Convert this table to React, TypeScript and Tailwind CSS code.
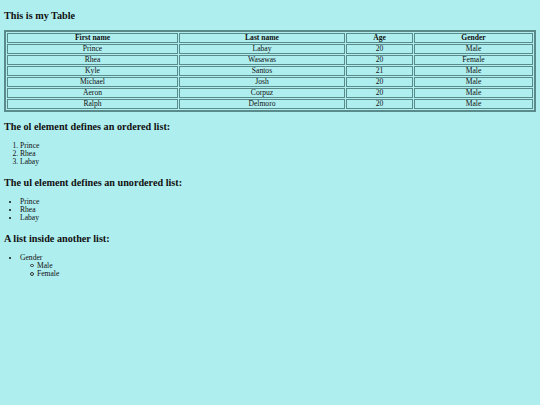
import React from "react";

type Person = { first: string; last: string; age: number; gender: string };

const people: Person[] = [
  { first: "Prince", last: "Labay", age: 20, gender: "Male" },
  { first: "Rhea", last: "Wasawas", age: 20, gender: "Female" },
  { first: "Kyle", last: "Santos", age: 21, gender: "Male" },
  { first: "Michael", last: "Josh", age: 20, gender: "Male" },
  { first: "Aeron", last: "Corpuz", age: 20, gender: "Male" },
  { first: "Ralph", last: "Delmoro", age: 20, gender: "Male" },
];

const cell = "border border-[#5a8b8b] p-0 h-[10px] leading-[8px] text-center";

function Heading({ children }: { children: React.ReactNode }) {
  return <h2 className="text-[10.2px] leading-[12px] font-bold mt-[9px] mb-[9px]">{children}</h2>;
}

function CircleItem({ children }: { children: React.ReactNode }) {
  return (
    <li className="flex items-center">
      <span className="w-[3.5px] h-[3.5px] rounded-full border-[0.8px] border-[#333] -ml-[7px] mr-[3.5px]" />
      {children}
    </li>
  );
}

export default function App(): React.JSX.Element {
  return (
    <div className="min-h-[405px] bg-[#afeeee] text-[#111] font-['Liberation_Serif',serif] text-[7.6px] leading-[8.1px] px-[4px] pt-[10px] pb-[4px]">
      <h2 className="text-[10.2px] leading-[12px] font-bold mb-[8px]">This is my Table</h2>

      {/* table */}
      <table className="w-[532px] table-fixed border-separate border-spacing-[1px] border-2 border-[#5b8a8a]">
        <colgroup>
          <col className="w-[171px]" />
          <col className="w-[166px]" />
          <col className="w-[67px]" />
          <col className="w-[119px]" />
        </colgroup>
        <thead>
          <tr>
            <th className={cell + " font-bold"}>First name</th>
            <th className={cell + " font-bold"}>Last name</th>
            <th className={cell + " font-bold"}>Age</th>
            <th className={cell + " font-bold"}>Gender</th>
          </tr>
        </thead>
        <tbody>
          {people.map((p) => (
            <tr key={p.first}>
              <td className={cell}>{p.first}</td>
              <td className={cell}>{p.last}</td>
              <td className={cell}>{p.age}</td>
              <td className={cell}>{p.gender}</td>
            </tr>
          ))}
        </tbody>
      </table>

      <Heading>The ol element defines an ordered list:</Heading>
      <ol className="list-decimal pl-[16px] mt-[8px] mb-[11px]">
        <li>Prince</li>
        <li>Rhea</li>
        <li>Labay</li>
      </ol>

      <Heading>The ul element defines an unordered list:</Heading>
      <ul className="list-disc pl-[16px] mt-[7px] mb-[10px]">
        <li>Prince</li>
        <li>Rhea</li>
        <li>Labay</li>
      </ul>

      <Heading>A list inside another list:</Heading>
      <ul className="list-disc pl-[16px] mt-[7px] mb-[10px]">
        <li>
          Gender
          <ul className="list-none pl-[17px]">
            <CircleItem>Male</CircleItem>
            <CircleItem>Female</CircleItem>
          </ul>
        </li>
      </ul>
    </div>
  );
}
